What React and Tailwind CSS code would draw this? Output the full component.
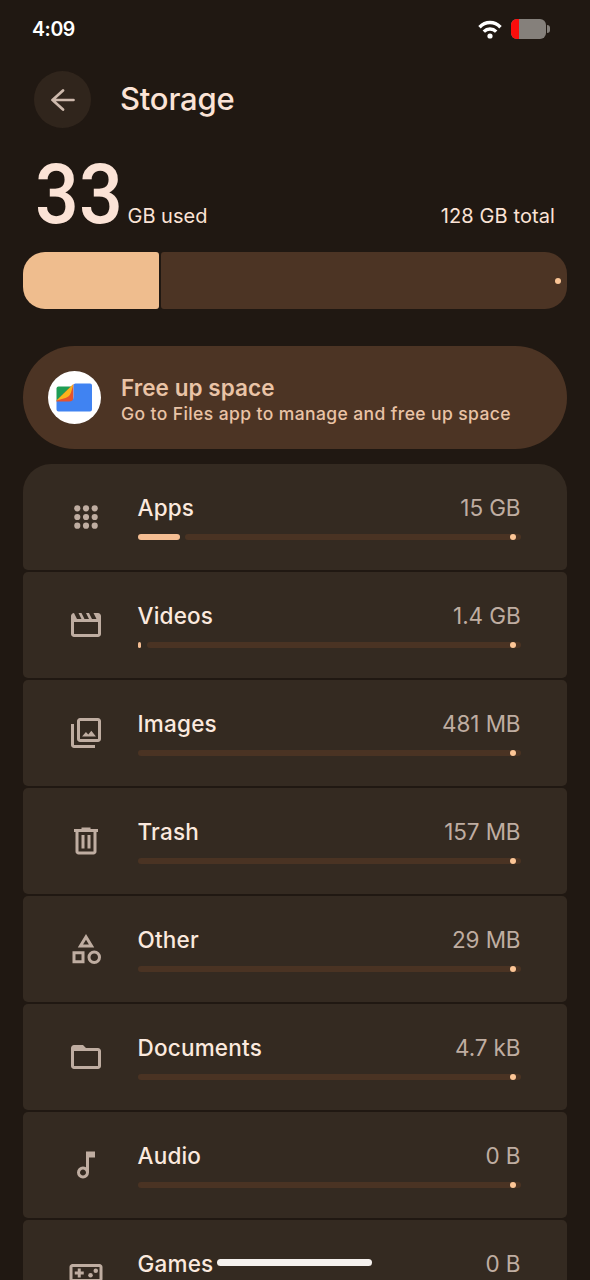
import React from 'react';

const symbols = {
  movie: 'm160-800 80 160h120l-80-160h80l80 160h120l-80-160h80l80 160h120l-80-160h120q33 0 56.5 23.5T880-720v480q0 33-23.5 56.5T800-160H160q-33 0-56.5-23.5T80-240v-480q0-33 23.5-56.5T160-800Zm0 240v320h640v-320H160Z',
  images: 'M375-390h370L622-540l-82 100-62-65-103 115Zm-55 150q-33 0-56.5-23.5T240-320v-480q0-33 23.5-56.5T320-880h480q33 0 56.5 23.5T880-800v480q0 33-23.5 56.5T800-240H320Zm0-80h480v-480H320v480ZM160-80q-33 0-56.5-23.5T80-160v-560h80v560h560v80H160Z',
  trash: 'M280-120q-33 0-56.5-23.5T200-200v-520h-40v-80h200v-40h240v40h200v80h-40v520q0 33-23.5 56.5T680-120H280Zm400-600H280v520h400v-520ZM360-280h80v-360h-80v360Zm160 0h80v-360h-80v360Z',
  category: 'm260-520 220-360 220 360H260ZM700-80q-75 0-127.5-52.5T520-260q0-75 52.5-127.5T700-440q75 0 127.5 52.5T880-260q0 75-52.5 127.5T700-80Zm-580-20v-320h320v320H120Zm580-60q42 0 71-29t29-71q0-42-29-71t-71-29q-42 0-71 29t-29 71q0 42 29 71t71 29Zm-500-20h160v-160H200v160Zm202-420h156l-78-126-78 126Z',
  folder: 'M160-160q-33 0-56.5-23.5T80-240v-480q0-33 23.5-56.5T160-800h240l80 80h320q33 0 56.5 23.5T880-640v400q0 33-23.5 56.5T800-160H160Zm0-80h640v-400H160v400Z',
  note: 'M400-120q-66 0-113-47t-47-113q0-66 47-113t113-47q23 0 42.5 5.5T480-418v-422h240v160H560v400q0 66-47 113t-113 47Zm0-80q33 0 56.5-23.5T480-280q0-33-23.5-56.5T400-360q-33 0-56.5 23.5T320-280q0 33 23.5 56.5T400-200Z',
};

function Symbol({ name }) {
  if (name === 'apps') {
    return (
      <svg viewBox="0 0 24 24" className="w-9 h-9 shrink-0" fill="currentColor">
        {[6.2, 12, 17.8].map((y) => [6.2, 12, 17.8].map((x) => <circle key={`${x}-${y}`} cx={x} cy={y} r="2.05" />))}
      </svg>
    );
  }
  if (name === 'games') {
    return (
      <svg viewBox="0 0 24 24" className="w-9 h-9 shrink-0" fill="currentColor">
        <path d="M21 6H3c-1.1 0-2 .9-2 2v8c0 1.1.9 2 2 2h18c1.1 0 2-.9 2-2V8c0-1.1-.9-2-2-2zm0 10H3V8h18v8zM6.500 15h2v-2h2v-2h-2V9h-2v2h-2v2h2z" />
        <circle cx="15" cy="13.5" r="1.5" />
        <circle cx="18.5" cy="10.5" r="1.5" />
      </svg>
    );
  }
  return (
    <svg viewBox="0 -960 960 960" className="w-9 h-9 shrink-0" fill="currentColor" fillRule="evenodd">
      <path d={symbols[name]} />
    </svg>
  );
}

const categories = [
  { icon: 'apps', label: 'Apps', size: '15 GB', used: 42 },
  { icon: 'movie', label: 'Videos', size: '1.4 GB', used: 3.5 },
  { icon: 'images', label: 'Images', size: '481 MB', used: 0 },
  { icon: 'trash', label: 'Trash', size: '157 MB', used: 0 },
  { icon: 'category', label: 'Other', size: '29 MB', used: 0 },
  { icon: 'folder', label: 'Documents', size: '4.7 kB', used: 0 },
  { icon: 'note', label: 'Audio', size: '0 B', used: 0 },
  { icon: 'games', label: 'Games', size: '0 B', used: 0 },
];

function CategoryRow({ icon, label, size, used }) {
  return (
    <div className="h-[105.5px] shrink-0 flex items-center pl-[44.5px] pr-[46.5px] bg-[#342a21] rounded-[5px] first:rounded-t-[28px] text-[#bfada1]">
      <div>
        <Symbol name={icon} />
      </div>
      <div className="ml-[34px] flex-1 flex flex-col gap-3 pt-px">
        <div className="flex justify-between text-[22.5px] leading-7">
          <span className="text-[#fbe9de] font-[450] tracking-[0.2px]">{label}</span>
          <span className="tracking-[-0.1px]">{size}</span>
        </div>
        <div className="flex gap-[5.5px] h-1.5">
          {used > 0 && <div className="rounded-full bg-[#f4bd92]" style={{ width: used }} />}
          <div className="flex-1 flex justify-end rounded-full bg-[#4a3323] pr-[5px]">
            <div className="w-1.5 h-1.5 rounded-full bg-[#fbc596]" />
          </div>
        </div>
      </div>
    </div>
  );
}

function App() {
  return (
    <div className="relative w-[590px] h-[1280px] overflow-hidden flex flex-col bg-[#201812] px-[23px] font-['Inter','Roboto',sans-serif] text-[#fbe3d6]">
      {/* Status bar */}
      <div className="h-[58px] shrink-0 flex items-center justify-between pl-[9px] pr-[17px] text-white">
        <span className="pt-0.5 text-[19.5px] font-semibold tracking-[-0.4px]">4:09</span>
        <div className="flex items-center gap-[9px]">
          <svg viewBox="0 0 24 19" className="w-6 h-[19px]" fill="none" stroke="currentColor" strokeWidth="3.4">
            <path d="M1.500 7.200C7.500 1 16.500 1 22.500 7.200" />
            <path d="M5.800 11.600C9.300 8.100 14.700 8.100 18.200 11.600" />
            <circle cx="12" cy="16" r="2.6" fill="currentColor" stroke="none" />
          </svg>
          <div className="flex items-center gap-px">
            <div className="w-[35px] h-5 rounded-[6px] overflow-hidden bg-[#85807b]">
              <div className="w-2 h-full bg-[#fb0d0b]" />
            </div>
            <div className="w-[3px] h-2 rounded-r-sm bg-[#85807b]" />
          </div>
        </div>
      </div>

      {/* Title */}
      <div className="h-[83px] shrink-0 flex items-center gap-[29px] pl-[11px]">
        <div className="w-[57px] h-[57px] rounded-full bg-[#30251c] flex items-center justify-center text-[#cdb9ac]">
          <svg viewBox="0 0 24 24" className="w-6 h-6" fill="none" stroke="currentColor" strokeWidth="2.7" strokeLinecap="round" strokeLinejoin="round">
            <path d="M22.5 12H1.5M12 2.500 1.5 12 12 21.500" />
          </svg>
        </div>
        <h1 className="text-[31px] font-[450] tracking-[-0.2px]">Storage</h1>
      </div>

      {/* Totals */}
      <div className="h-[111px] shrink-0 flex items-baseline justify-between px-3">
        <div className="flex items-baseline gap-[9px]">
          <span className="-mr-3 origin-left scale-x-[0.92] font-['Roboto'] font-medium text-[84px] leading-[108px]">33</span>
          <span className="text-[20px]">GB used</span>
        </div>
        <span className="text-[20px] tracking-[0.1px]">128 GB total</span>
      </div>
      <div className="h-[57px] shrink-0 flex gap-0.5">
        <div className="w-[136px] bg-[#efbd8e] rounded-l-[22px] rounded-r-[3px]" />
        <div className="flex-1 flex items-center justify-end pr-1.5 bg-[#4c3424] rounded-r-[22px] rounded-l-[3px]">
          <div className="w-1.5 h-1.5 rounded-full bg-[#fbc596]" />
        </div>
      </div>

      {/* Files shortcut */}
      <div className="mt-[37px] h-[103px] shrink-0 flex items-center gap-5 pl-[25px] rounded-full bg-[#4c3424] text-[#e9c3a6]">
        <svg viewBox="0 0 53 53" className="w-[53px] h-[53px]">
          <circle cx="26.5" cy="26.5" r="26.5" fill="#fff" />
          <path d="M8.500 17.500q0-2 2-2H25V28L8.500 30z" fill="#1f9d55" />
          <path d="M8.500 29.500 25.500 13v18h-17z" fill="#e5532f" />
          <path d="M8.500 29.500 25.500 13l-2.500 8.500q-1.200 4-5.500 5.500z" fill="#fbb31c" />
          <path d="M25.500 14.500q0-2 2-2H42q2 0 2 2v24q0 2-2 2H10.500q-2 0-2-2v-8H21q4.500 0 4.500-4.500z" fill="#4083f2" />
        </svg>
        <div className="pt-1">
          <div className="text-[22.5px] leading-7 font-semibold tracking-[0.05px]">Free up space</div>
          <div className="text-[17.5px] leading-6 font-medium tracking-[0.4px]">Go to Files app to manage and free up space</div>
        </div>
      </div>

      {/* Categories */}
      <div className="mt-[15px] flex flex-col gap-[2.5px]">
        {categories.map((category) => (
          <CategoryRow key={category.label} {...category} />
        ))}
      </div>

      {/* Gesture handle */}
      <div className="absolute left-[217px] top-[1259px] w-[155px] h-[7px] rounded-full bg-[#f5f1ee]" />
    </div>
  );
}

export default App;
